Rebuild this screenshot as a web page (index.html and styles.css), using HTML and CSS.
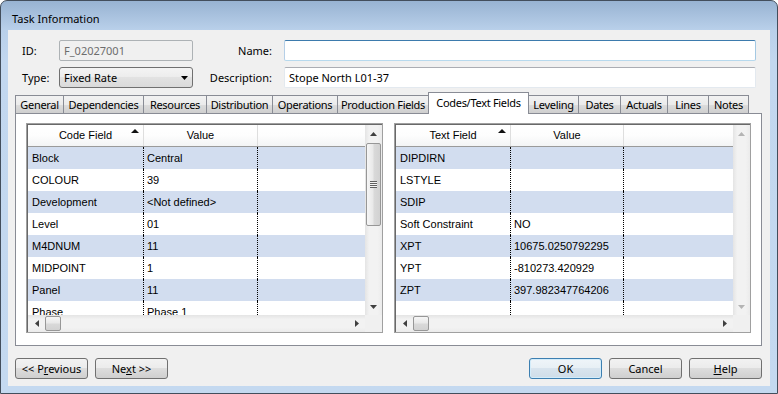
FILE: index.html
```html
<!DOCTYPE html>
<html lang="en">
<head>
    <meta charset="UTF-8">
    <title>Task Information</title>
    <link rel="stylesheet" href="styles.css">
</head>
<body>
    <div class="window">
        <div class="titlebar">Task Information</div>
        <div class="client">
            <div class="fields">
                <div class="lbl">ID:</div>
                <div class="input input-disabled">F_02027001</div>
                <div class="lbl lbl-right">Name:</div>
                <div class="input input-focus"></div>
                <div class="lbl">Type:</div>
                <div class="combo">
                    <span>Fixed Rate</span>
                    <svg class="combo-arrow" width="7" height="4"><polygon points="0,0 7,0 3.5,4" fill="#000"/></svg>
                </div>
                <div class="lbl lbl-right">Description:</div>
                <div class="input">Stope North L01-37</div>
            </div>

            <div class="tabs">
                <div class="tab">General</div>
                <div class="tab">Dependencies</div>
                <div class="tab">Resources</div>
                <div class="tab">Distribution</div>
                <div class="tab">Operations</div>
                <div class="tab">Production Fields</div>
                <div class="tab tab-active">Codes/Text Fields</div>
                <div class="tab">Leveling</div>
                <div class="tab">Dates</div>
                <div class="tab">Actuals</div>
                <div class="tab">Lines</div>
                <div class="tab">Notes</div>
            </div>

            <div class="panel">
                <!-- code fields -->
                <div class="grid">
                    <div class="grid-main">
                        <div class="grid-table">
                            <div class="grid-head">
                                <div class="cell c1">Code Field<svg class="sort" width="8" height="4"><polygon points="0,4 4,0 8,4" fill="#111"/></svg></div>
                                <div class="cell c2">Value</div>
                                <div class="cell c3"></div>
                            </div>
                            <div class="row alt"><div class="cell c1">Block</div><div class="cell c2">Central</div><div class="cell c3"></div></div>
                            <div class="row"><div class="cell c1">COLOUR</div><div class="cell c2">39</div><div class="cell c3"></div></div>
                            <div class="row alt"><div class="cell c1">Development</div><div class="cell c2">&lt;Not defined&gt;</div><div class="cell c3"></div></div>
                            <div class="row"><div class="cell c1">Level</div><div class="cell c2">01</div><div class="cell c3"></div></div>
                            <div class="row alt"><div class="cell c1">M4DNUM</div><div class="cell c2">11</div><div class="cell c3"></div></div>
                            <div class="row"><div class="cell c1">MIDPOINT</div><div class="cell c2">1</div><div class="cell c3"></div></div>
                            <div class="row alt"><div class="cell c1">Panel</div><div class="cell c2">11</div><div class="cell c3"></div></div>
                            <div class="row"><div class="cell c1">Phase</div><div class="cell c2">Phase 1</div><div class="cell c3"></div></div>
                        </div>
                        <div class="vscroll">
                            <div class="sb-btn"><svg width="7" height="4"><polygon points="0,4 3.5,0 7,4" fill="#404040"/></svg></div>
                            <div class="sb-track">
                                <div class="vthumb"><div class="grip"></div></div>
                            </div>
                            <div class="sb-btn"><svg width="7" height="4"><polygon points="0,0 7,0 3.5,4" fill="#404040"/></svg></div>
                        </div>
                    </div>
                    <div class="grid-foot">
                        <div class="hscroll">
                            <div class="sb-btn"><svg width="4" height="7"><polygon points="4,0 4,7 0,3.5" fill="#404040"/></svg></div>
                            <div class="hthumb"></div>
                            <div class="sb-track"></div>
                            <div class="sb-btn"><svg width="4" height="7"><polygon points="0,0 0,7 4,3.5" fill="#404040"/></svg></div>
                        </div>
                        <div class="corner"></div>
                    </div>
                </div>

                <!-- text fields -->
                <div class="grid grid-right">
                    <div class="grid-main">
                        <div class="grid-table">
                            <div class="grid-head">
                                <div class="cell c1">Text Field<svg class="sort" width="8" height="4"><polygon points="0,4 4,0 8,4" fill="#111"/></svg></div>
                                <div class="cell c2">Value</div>
                                <div class="cell c3"></div>
                            </div>
                            <div class="row alt"><div class="cell c1">DIPDIRN</div><div class="cell c2"></div><div class="cell c3"></div></div>
                            <div class="row"><div class="cell c1">LSTYLE</div><div class="cell c2"></div><div class="cell c3"></div></div>
                            <div class="row alt"><div class="cell c1">SDIP</div><div class="cell c2"></div><div class="cell c3"></div></div>
                            <div class="row"><div class="cell c1">Soft Constraint</div><div class="cell c2">NO</div><div class="cell c3"></div></div>
                            <div class="row alt"><div class="cell c1">XPT</div><div class="cell c2">10675.0250792295</div><div class="cell c3"></div></div>
                            <div class="row"><div class="cell c1">YPT</div><div class="cell c2">-810273.420929</div><div class="cell c3"></div></div>
                            <div class="row alt"><div class="cell c1">ZPT</div><div class="cell c2">397.982347764206</div><div class="cell c3"></div></div>
                            <div class="row"><div class="cell c1"></div><div class="cell c2"></div><div class="cell c3"></div></div>
                        </div>
                        <div class="vscroll vscroll-off">
                            <div class="sb-btn"><svg width="7" height="4"><polygon points="0,4 3.5,0 7,4" fill="#b4b4b4"/></svg></div>
                            <div class="sb-track"></div>
                            <div class="sb-btn"><svg width="7" height="4"><polygon points="0,0 7,0 3.5,4" fill="#b4b4b4"/></svg></div>
                        </div>
                    </div>
                    <div class="grid-foot">
                        <div class="hscroll">
                            <div class="sb-btn"><svg width="4" height="7"><polygon points="4,0 4,7 0,3.5" fill="#404040"/></svg></div>
                            <div class="hthumb"></div>
                            <div class="sb-track"></div>
                            <div class="sb-btn"><svg width="4" height="7"><polygon points="0,0 0,7 4,3.5" fill="#404040"/></svg></div>
                        </div>
                        <div class="corner"></div>
                    </div>
                </div>
            </div>

            <div class="buttons">
                <div class="btn">&lt;&lt; P<u>r</u>evious</div>
                <div class="btn">Ne<u>x</u>t &gt;&gt;</div>
                <div class="spacer"></div>
                <div class="btn btn-default">OK</div>
                <div class="btn">Cancel</div>
                <div class="btn"><u>H</u>elp</div>
            </div>
        </div>
    </div>
</body>
</html>
```

FILE: styles.css
```css
* {
    box-sizing: border-box;
}
body {
    margin: 0;
    font-family: "Noto Sans", sans-serif;
    font-size: 11px;
    color: #000;
    background: #fff;
}
.window {
    width: 778px;
    height: 394px;
    border: 1px solid #434e5c;
    border-radius: 7px 7px 0 0;
    background: linear-gradient(#98b3d2, #b9d0ea 29px, #c2d7ef 60px, #c4d9f0);
    padding: 0 7px 7px;
    display: flex;
    flex-direction: column;
}
.titlebar {
    height: 29px;
    padding: 10px 0 0 4px;
    line-height: 16px;
}
.client {
    height: 356px;
    background: #f0f0f0;
    display: flex;
    flex-direction: column;
}

/* top fields */
.fields {
    display: grid;
    grid-template-columns: 37px 134px 91px 1fr;
    grid-auto-rows: 21px;
    row-gap: 6px;
    padding: 10px 14px 0;
}
.lbl {
    line-height: 21px;
}
.lbl-right {
    text-align: right;
    padding-right: 12px;
}
.input {
    border: 1px solid;
    border-color: #abadb3 #e3e9ef #e3e9ef #e3e9ef;
    background: #fff;
    line-height: 19px;
    padding: 0 4px;
    border-radius: 2px;
    white-space: nowrap;
}
.input-disabled {
    background: #f0f0f0;
    border-color: #adb2b5;
    color: #6d6d6d;
}
.input-focus {
    border-color: #3d7bad #a4c9e3 #b7d9ed #b5cfe7;
}
.combo {
    display: flex;
    align-items: center;
    justify-content: space-between;
    border: 1px solid #707070;
    border-radius: 3px;
    background: linear-gradient(#f4f4f4, #ececec 50%, #e2e2e2 50%, #dadada);
    padding: 0 3px 0 4px;
}
.combo-arrow {
    margin-right: 1px;
}

/* tabs */
.tabs {
    display: flex;
    align-items: flex-end;
    height: 21px;
    margin: 4px 8px 0 7px;
    letter-spacing: -0.3px;
}
.tab {
    height: 18px;
    border: 1px solid #898c95;
    border-bottom: none;
    margin-left: -1px;
    background: linear-gradient(#f2f2f2, #ebebeb 50%, #dddddd 50%, #cfcfcf);
    line-height: 17px;
    text-align: center;
    white-space: nowrap;
}
.tab:first-child { margin-left: 0; width: 49px; }
.tab:nth-child(2) { width: 81px; }
.tab:nth-child(3) { width: 64px; }
.tab:nth-child(4) { width: 67px; }
.tab:nth-child(5) { width: 66px; }
.tab:nth-child(6) { width: 92px; }
.tab:nth-child(7) { width: 101px; }
.tab:nth-child(8) { width: 51px; }
.tab:nth-child(9) { width: 43px; }
.tab:nth-child(10) { width: 48px; }
.tab:nth-child(11) { width: 42px; }
.tab:nth-child(12) { width: 41px; }
.tab-active {
    height: 22px;
    margin-bottom: -1px;
    background: #fff;
    position: relative;
    line-height: 19px;
}

/* panel with the two grids */
.panel {
    height: 233px;
    margin: 0 8px 0 7px;
    border: 1px solid #898c95;
    background: #fff;
    padding: 9px 10px 0;
    display: flex;
    gap: 11px;
}
.grid {
    flex: 1;
    height: 210px;
    border: 1px solid #a0a0a0;
    box-shadow: inset 1px 1px 0 #696969;
    padding: 1px 0 0 1px;
    display: flex;
    flex-direction: column;
    font-family: "Liberation Sans", Arial, sans-serif;
    font-size: 11px;
}
.grid-main {
    flex: 1;
    min-height: 0;
    display: flex;
}
.grid-table {
    flex: 1;
    overflow: hidden;
    background: #fff;
}
.grid-head {
    display: flex;
    height: 22px;
    background: linear-gradient(#ffffff, #fdfdfd 50%, #f3f4f5);
    border-bottom: 1px solid #9a9a9a;
}
.grid-head .cell {
    position: relative;
    text-align: center;
    line-height: 21px;
    border-right: 1px solid #dedede;
    padding: 0;
}
.grid-head .c3 {
    border-right: none;
}
.sort {
    position: absolute;
    right: 4px;
    top: 4px;
}
.row {
    display: flex;
    height: 22px;
}
.row.alt {
    background: #d2ddef;
}
.cell {
    line-height: 22px;
    white-space: nowrap;
    overflow: hidden;
}
.c1 {
    width: 116px;
    padding-left: 4px;
}
.c2 {
    width: 114px;
    padding-left: 3px;
}
.c3 {
    flex: 1;
}
.row .c1,
.row .c2 {
    border-right: 1px dotted #000;
}
.grid-right .c1 {
    width: 115px;
}
.grid-right .c2 {
    width: 113px;
}

/* scrollbars */
.vscroll {
    width: 17px;
    display: flex;
    flex-direction: column;
    background: linear-gradient(to right, #e4e4e4, #f2f2f2 25%, #f2f2f2 75%, #ebebeb);
}
.sb-btn {
    flex: none;
    width: 17px;
    height: 17px;
    display: flex;
    align-items: center;
    justify-content: center;
}
.sb-track {
    flex: 1;
}
.vthumb {
    margin: 1px 1px 0;
    height: 83px;
    border: 1px solid #979797;
    border-radius: 2px;
    background: linear-gradient(to right, #f6f6f6, #e9e9e9 45%, #d9d9d9 55%, #d2d2d2);
    display: flex;
    align-items: center;
    justify-content: center;
}
.grip {
    width: 7px;
    height: 7px;
    background: repeating-linear-gradient(#606060 0 1px, #f4f4f4 1px 2px);
}
.grid-foot {
    flex: none;
    display: flex;
    height: 17px;
}
.hscroll {
    flex: 1;
    display: flex;
    background: linear-gradient(#e4e4e4, #f2f2f2 25%, #f2f2f2 75%, #ebebeb);
}
.hthumb {
    width: 16px;
    margin: 1px 0;
    border: 1px solid #979797;
    border-radius: 2px;
    background: linear-gradient(#f6f6f6, #e9e9e9 45%, #d9d9d9 55%, #d2d2d2);
}
.corner {
    width: 17px;
    background: #f0f0f0;
}

/* bottom buttons */
.buttons {
    display: flex;
    gap: 7px;
    height: 21px;
    margin: 12px 8px 0 7px;
}
.spacer {
    flex: 1;
}
.btn {
    width: 73px;
    border: 1px solid #707070;
    border-radius: 3px;
    background: linear-gradient(#f2f2f2, #ebebeb 50%, #dddddd 50%, #cfcfcf);
    line-height: 19px;
    text-align: center;
}
.btn-default {
    border-color: #3c7fb1;
    box-shadow: inset 0 0 0 1px #d3ecfa;
    background: linear-gradient(#eff5f9, #e7eff5 50%, #d8e4ee 50%, #cfdde8);
}
```
